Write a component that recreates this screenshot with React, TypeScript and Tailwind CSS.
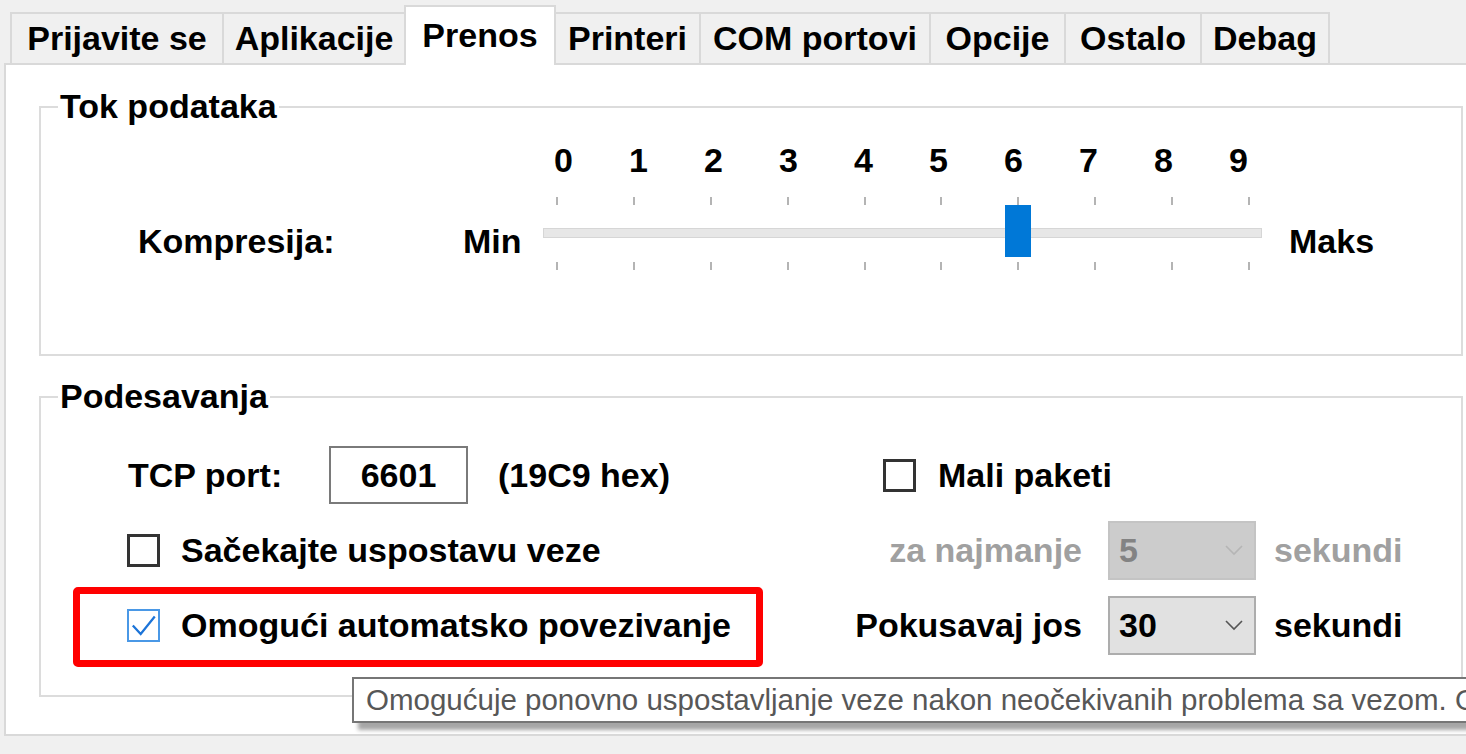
// Prenos tab of the settings dialog, with tooltip over "Omogući automatsko povezivanje"

const tabs = [
  { label: 'Prijavite se', cls: 'w-[212px] border-l-2' },
  { label: 'Aplikacije', cls: 'w-[182px] border-l-2' },
  { label: 'Prenos', cls: 'active' },
  { label: 'Printeri', cls: 'w-[143px]' },
  { label: 'COM portovi', cls: 'w-[230px] border-l-2' },
  { label: 'Opcije', cls: 'w-[135px] border-l-2' },
  { label: 'Ostalo', cls: 'w-[136px] border-l-2' },
  { label: 'Debag', cls: 'w-[130px] border-x-2' },
];

const levels = ['0', '1', '2', '3', '4', '5', '6', '7', '8', '9'];

function CheckBox({ checked }: { checked?: boolean }) {
  if (checked) {
    return (
      <span className="flex h-[33px] w-[33px] shrink-0 items-center justify-center border-2 border-[#4a98e6] bg-white">
        <svg viewBox="0 0 24 24" className="h-[27px] w-[27px]">
          <path d="M2.5 12l7 7.5L22 4" fill="none" stroke="#1c74d8" strokeWidth="2" />
        </svg>
      </span>
    );
  }
  return <span className="h-[33px] w-[33px] shrink-0 border-[3px] border-[#333333] bg-white" />;
}

function Chevron({ color }: { color: string }) {
  return (
    <svg viewBox="0 0 20 12" className="h-[12px] w-[20px]">
      <path d="M2 2l8 8 8-8" fill="none" stroke={color} strokeWidth="1.6" />
    </svg>
  );
}

function GroupBox({ title, className, children }: { title: string; className: string; children: React.ReactNode }) {
  return (
    <div className={`relative w-[1424px] border-2 border-[#dcdcdc] ${className}`}>
      <span className="absolute left-[17px] top-[-22px] bg-white px-[2px] leading-[40px]">{title}</span>
      {children}
    </div>
  );
}

export default function App() {
  return (
    <div className="relative h-[754px] w-[1466px] overflow-hidden bg-[#f0f0f0] font-['Liberation_Sans',Arial,sans-serif] text-[34px] font-bold text-black">
      {/* Tabs */}
      <div className="flex h-[63px] items-end pl-[10px]">
        {tabs.map((t) =>
          t.cls === 'active' ? (
            <div
              key={t.label}
              className="relative z-10 mb-[-2px] flex h-[60px] w-[152px] items-center justify-center border-x-2 border-t-2 border-[#d9d9d9] bg-white pb-[2px]"
            >
              {t.label}
            </div>
          ) : (
            <div
              key={t.label}
              className={`flex h-[51px] items-center justify-center border-t-2 border-[#d9d9d9] bg-[#f0f0f0] ${t.cls}`}
            >
              {t.label}
            </div>
          )
        )}
      </div>

      {/* Panel */}
      <div className="ml-[4px] h-[673px] border-y-2 border-l-2 border-[#d9d9d9] bg-white pl-[33px] pt-[41px]">
        <GroupBox title="Tok podataka" className="h-[250px]">
          <div className="flex items-start pl-[97px] pt-[37px]">
            <span className="mt-[76px] w-[325px] leading-[40px]">Kompresija:</span>
            <span className="mt-[76px] w-[80px] leading-[40px]">Min</span>

            {/* Slider */}
            <div className="w-[719px]">
              <div className="ml-[-17px] grid h-[30px] grid-cols-[repeat(10,75px)] leading-[30px]">
                {levels.map((l) => (
                  <span key={l} className="text-center">
                    {l}
                  </span>
                ))}
              </div>
              <div className="mt-[22px] flex h-[8px] justify-between pl-[13px] pr-[12px]">
                {levels.map((l) => (
                  <span key={l} className="h-[8px] w-[2px] bg-[#b4b4b4]" />
                ))}
              </div>
              <div className="relative h-[57px] pt-[23px]">
                <div className="h-[10px] border border-[#d6d6d6] bg-[#e7e7e7]" />
                <div className="absolute left-[462px] top-0 h-[52px] w-[26px] bg-[#0078d7]" />
              </div>
              <div className="flex h-[8px] justify-between pl-[13px] pr-[12px]">
                {levels.map((l) => (
                  <span key={l} className="h-[8px] w-[2px] bg-[#b4b4b4]" />
                ))}
              </div>
            </div>

            <span className="ml-[27px] mt-[76px] leading-[40px]">Maks</span>
          </div>
        </GroupBox>

        <GroupBox title="Podesavanja" className="mt-[40px] h-[301px]">
          <div className="flex flex-col gap-[17px] pl-[86px] pt-[48px]">
            {/* TCP port */}
            <div className="flex h-[58px] items-center">
              <div className="flex w-[713px] items-center">
                <span className="w-[202px] pl-[1px]">TCP port:</span>
                <div className="flex h-[58px] w-[139px] items-center justify-center border-2 border-[#7a7a7a]">6601</div>
                <span className="ml-[30px]">(19C9 hex)</span>
              </div>
              <div className="ml-[43px] flex items-center gap-[22px]">
                <CheckBox />
                <span>Mali paketi</span>
              </div>
            </div>

            {/* Sačekajte */}
            <div className="flex h-[58px] items-center">
              <div className="flex w-[713px] items-center gap-[21px]">
                <CheckBox />
                <span>Sačekajte uspostavu veze</span>
              </div>
              <span className="w-[242px] text-right text-[#a0a0a0]">za najmanje</span>
              <div className="ml-[26px] flex h-[59px] w-[148px] items-center justify-between border-2 border-[#c4c4c4] bg-[#cccccc] pl-[9px] pr-[10px] text-[#838383]">
                <span>5</span>
                <Chevron color="#b5b5b5" />
              </div>
              <span className="ml-[18px] text-[#a0a0a0]">sekundi</span>
            </div>

            {/* Omogući */}
            <div className="flex h-[58px] items-center">
              <div className="flex w-[713px] items-center gap-[21px]">
                <CheckBox checked />
                <span>Omogući automatsko povezivanje</span>
              </div>
              <span className="w-[242px] text-right">Pokusavaj jos</span>
              <div className="ml-[26px] flex h-[59px] w-[148px] items-center justify-between border-2 border-[#adadad] bg-[#e1e1e1] pl-[9px] pr-[10px]">
                <span>30</span>
                <Chevron color="#555555" />
              </div>
              <span className="ml-[18px]">sekundi</span>
            </div>
          </div>
        </GroupBox>
      </div>

      {/* Highlight */}
      <div className="absolute left-[73px] top-[587px] h-[80px] w-[690px] rounded-[5px] border-[7px] border-[#ff0000]" />

      {/* Tooltip */}
      <div className="absolute left-[352px] top-[677px] flex h-[46px] w-[1200px] items-center border-2 border-[#767676] bg-white pl-[12px] shadow-[6px_7px_4px_rgba(0,0,0,0.35)]">
        <span className="whitespace-nowrap text-[29.5px] font-normal text-[#575757]">
          Omogućuje ponovno uspostavljanje veze nakon neočekivanih problema sa vezom. O
        </span>
      </div>
    </div>
  );
}
